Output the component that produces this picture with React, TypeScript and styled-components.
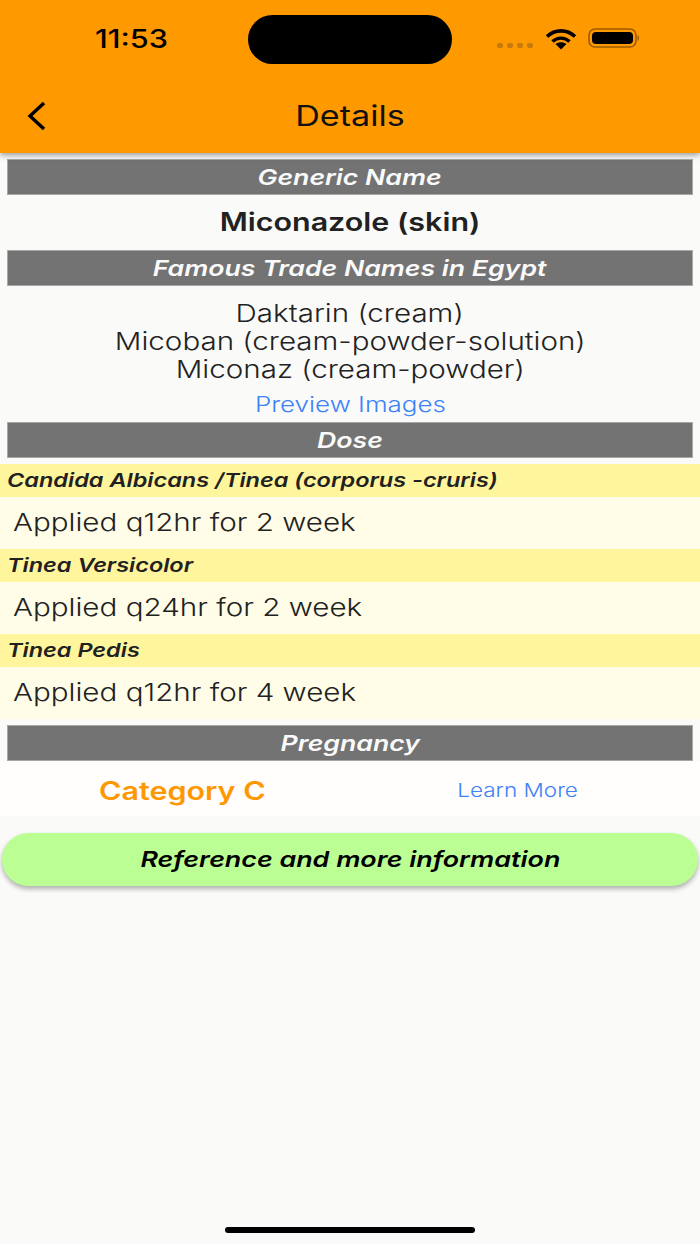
import styled, { createGlobalStyle } from 'styled-components';

const GlobalStyle = createGlobalStyle`
  html, body {
    margin: 0;
    padding: 0;
    background: #fafafa;
  }
  * {
    box-sizing: border-box;
  }
`;

const Screen = styled.div`
  position: relative;
  width: 700px;
  height: 1244px;
  background: #fafaf8;
  font-family: Inter, "Liberation Sans", sans-serif;
  overflow: hidden;
`;

const Stretched = styled.span<{ $left?: boolean }>`
  display: inline-block;
  white-space: nowrap;
  transform: scaleX(1.218);
  transform-origin: ${(p) => (p.$left ? 'left center' : 'center')};
`;

const TopBar = styled.header`
  position: relative;
  z-index: 2;
  height: 153px;
  background: #ff9900;
  box-shadow: 0 2px 6px rgba(0, 0, 0, 0.4);
  display: flex;
  flex-direction: column;
`;

const StatusRow = styled.div`
  height: 78px;
  display: flex;
  align-items: flex-start;
  position: relative;
`;

const Clock = styled.span`
  margin: 23px 0 0 95px;
  font-size: 25.2px;
  line-height: 32px;
  font-weight: 500;
  color: #000;
`;

const Island = styled.div`
  position: absolute;
  left: 248px;
  top: 15px;
  width: 204px;
  height: 49px;
  border-radius: 25px;
  background: #000;
`;

const StatusIcons = styled.div`
  position: absolute;
  left: 497px;
  top: 28px;
  display: flex;
  align-items: flex-start;
`;

const Dots = styled.div`
  display: flex;
  gap: 4px;
  margin-top: 15px;
  width: 48px;
`;

const Dot = styled.span`
  width: 6px;
  height: 5px;
  border-radius: 2px;
  background: #c67a08;
`;

const NavRow = styled.div`
  position: relative;
  flex: 1;
  display: flex;
  align-items: center;
  justify-content: center;
`;

const BackButton = styled.button`
  position: absolute;
  left: 24px;
  top: 21px;
  width: 26px;
  height: 32px;
  padding: 0;
  border: 0;
  background: none;
  display: flex;
`;

const Title = styled.h1`
  margin: 0;
  font-size: 28px;
  line-height: 36px;
  font-weight: 400;
  color: #111;
`;

const Content = styled.main`
  padding-top: 6px;
`;

const SectionBar = styled.div`
  height: 36px;
  margin: 0 7px;
  padding-bottom: 1px;
  background: #737373;
  border: 1px solid #a8a8a8;
  display: flex;
  align-items: center;
  justify-content: center;
  color: #fafafa;
  font-size: 21.9px;
  font-style: italic;
  font-weight: 600;
`;

const GenericName = styled.div`
  height: 55px;
  padding-bottom: 2px;
  display: flex;
  align-items: center;
  justify-content: center;
  font-size: 25px;
  font-weight: 600;
  color: #212121;
`;

const TradeNames = styled.div`
  height: 136px;
  padding-top: 14px;
  display: flex;
  flex-direction: column;
  align-items: center;
`;

const TradeLine = styled.div`
  font-size: 24.25px;
  line-height: 28px;
  font-weight: 300;
  color: #222;
`;

const PreviewLink = styled.a`
  margin-top: 6px;
  font-size: 21.3px;
  line-height: 28px;
  font-weight: 300;
  color: #3d82f7;
`;

const DoseList = styled.div`
  margin: 6px 0;
`;

const DoseTitle = styled.div`
  height: 33px;
  padding: 0 0 2px 7px;
  display: flex;
  align-items: center;
  background: #fff59d;
  font-size: 19.3px;
  font-style: italic;
  font-weight: 600;
  color: #212121;
`;

const DoseText = styled.div`
  height: 52px;
  padding: 0 0 3px 13px;
  display: flex;
  align-items: center;
  background: #fffde7;
  font-size: 24.3px;
  font-weight: 300;
  color: #222;
`;

const PregnancyRow = styled.div`
  height: 55px;
  display: grid;
  grid-template-columns: 1fr 1fr;
  background: #fffefc;
`;

const Category = styled.div`
  display: flex;
  align-items: center;
  justify-content: center;
  padding: 4px 0 0 14px;
  font-size: 25px;
  font-weight: 600;
  color: #ff9800;
`;

const LearnMore = styled.a`
  display: flex;
  align-items: center;
  justify-content: center;
  padding: 2px 14px 0 0;
  font-size: 18.5px;
  font-weight: 300;
  color: #3d82f7;
`;

const ReferenceButton = styled.button`
  display: flex;
  align-items: center;
  justify-content: center;
  width: 696px;
  height: 53px;
  margin: 17px 2px 0;
  padding: 0 0 2px;
  border: 0;
  border-radius: 27px;
  background: #bbff94;
  box-shadow: 0 3px 5px rgba(0, 0, 0, 0.3);
  font-family: inherit;
  font-size: 22.05px;
  font-style: italic;
  font-weight: 600;
  color: #000;
`;

const HomeIndicator = styled.div`
  position: absolute;
  left: 225px;
  bottom: 11px;
  width: 250px;
  height: 6px;
  border-radius: 3px;
  background: #000;
`;

const doses = [
  { title: 'Candida Albicans /Tinea (corporus -cruris)', text: 'Applied q12hr for 2 week' },
  { title: 'Tinea Versicolor', text: 'Applied q24hr for 2 week' },
  { title: 'Tinea Pedis', text: 'Applied q12hr for 4 week' },
];

function App() {
  return (
    <Screen>
      <GlobalStyle />
      <TopBar>
        <StatusRow>
          <Clock>
            <Stretched $left>11:53</Stretched>
          </Clock>
          <Island />
          <StatusIcons>
            <Dots>
              <Dot />
              <Dot />
              <Dot />
              <Dot />
            </Dots>
            <svg width="32" height="22" viewBox="0 0 32 22" style={{ marginRight: 11 }}>
              <path d="M2 8.5 C10 1 22 1 30 8.5" fill="none" stroke="#000" strokeWidth="3.6" />
              <path d="M7.5 13.5 C12.5 9 19.5 9 24.5 13.5" fill="none" stroke="#000" strokeWidth="3.4" />
              <path d="M10.5 16 L16 21.5 L21.5 16 C18 13.5 14 13.5 10.5 16 Z" fill="#000" />
            </svg>
            <svg width="52" height="20" viewBox="0 0 52 20">
              <rect x="1" y="1" width="47" height="18" rx="6" fill="none" stroke="#9a5c00" strokeWidth="1.6" />
              <rect x="4" y="4" width="41" height="12" rx="4" fill="#000" />
              <path d="M49.5 7 C51.5 8 51.5 12 49.5 13 Z" fill="#9a5c00" />
            </svg>
          </StatusIcons>
        </StatusRow>
        <NavRow>
          <BackButton aria-label="Back">
            <svg width="26" height="32" viewBox="0 0 26 32">
              <path d="M20 4 L6 17 L20 30" fill="none" stroke="#000" strokeWidth="3.4" />
            </svg>
          </BackButton>
          <Title>
            <Stretched>Details</Stretched>
          </Title>
        </NavRow>
      </TopBar>
      <Content>
        <SectionBar>
          <Stretched>Generic Name</Stretched>
        </SectionBar>
        <GenericName>
          <Stretched>Miconazole (skin)</Stretched>
        </GenericName>
        <SectionBar>
          <Stretched>Famous Trade Names in Egypt</Stretched>
        </SectionBar>
        <TradeNames>
          <TradeLine>
            <Stretched>Daktarin (cream)</Stretched>
          </TradeLine>
          <TradeLine>
            <Stretched>Micoban (cream-powder-solution)</Stretched>
          </TradeLine>
          <TradeLine>
            <Stretched>Miconaz (cream-powder)</Stretched>
          </TradeLine>
          <PreviewLink>
            <Stretched>Preview Images</Stretched>
          </PreviewLink>
        </TradeNames>
        <SectionBar>
          <Stretched>Dose</Stretched>
        </SectionBar>
        <DoseList>
          {doses.map((d) => (
            <div key={d.title}>
              <DoseTitle>
                <Stretched $left>{d.title}</Stretched>
              </DoseTitle>
              <DoseText>
                <Stretched $left>{d.text}</Stretched>
              </DoseText>
            </div>
          ))}
        </DoseList>
        <SectionBar>
          <Stretched>Pregnancy</Stretched>
        </SectionBar>
        <PregnancyRow>
          <Category>
            <Stretched>Category C</Stretched>
          </Category>
          <LearnMore>
            <Stretched>Learn More</Stretched>
          </LearnMore>
        </PregnancyRow>
        <ReferenceButton>
          <Stretched>Reference and more information</Stretched>
        </ReferenceButton>
      </Content>
      <HomeIndicator />
    </Screen>
  );
}

export default App;
